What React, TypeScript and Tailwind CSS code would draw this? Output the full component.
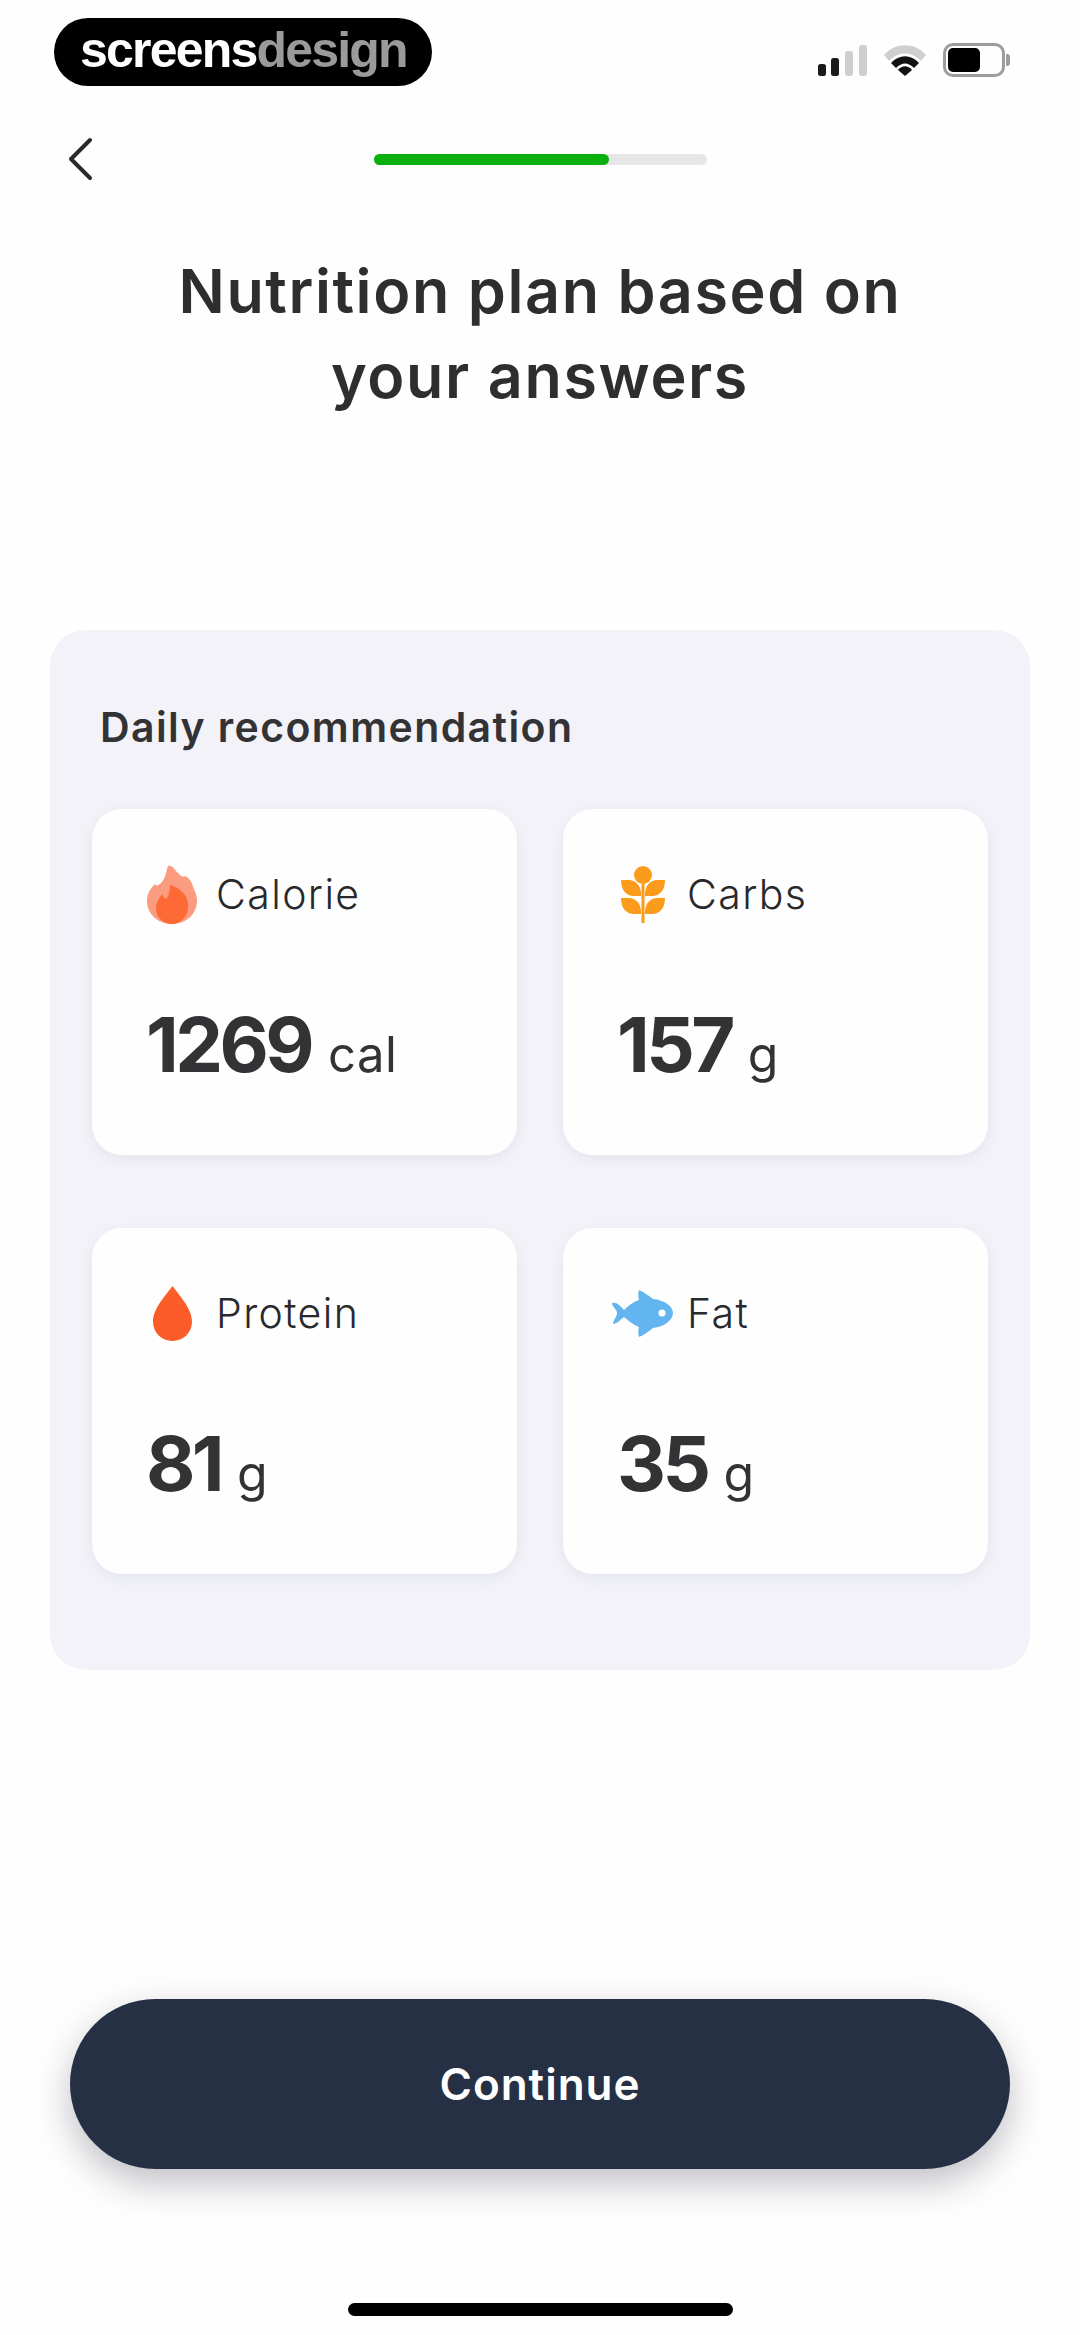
const sans = "font-['Inter','Liberation_Sans',sans-serif]";

function Flame() {
  return (
    <svg width="50" height="59" viewBox="0 0 50 59" className="shrink-0">
      <path d="M21 1C25 0 27 4 30 7C33 10 35 13 38 11C43 13 45 18 47 24C49 29 50 31 50 36C50 49 39 59 25 59C11 59 0 49 0 36C0 28 4 23 8 19C10 22 11 20 14 18C19 13 19 6 21 1Z" fill="#fb9c80" />
      <path d="M19 34C22 31 23 25 23 20C30 22 36 26 39 32C41 36 41 39 41 42C41 51 34 59 25 59C16 59 9 52 9 44C9 39 11 34 15 29C16 31 17 33 19 34Z" fill="#fe6a35" />
    </svg>
  );
}

function Wheat() {
  return (
    <svg width="44" height="57" viewBox="0 0 44 57" className="shrink-0">
      <circle cx="22" cy="9" r="9" fill="#fb9b1b" />
      <rect x="20.5" y="18" width="3" height="39" fill="#fb9b1b" />
      <path d="M0 14H8C14 14 19.5 19 20 27V30H13C5 30 0 24 0 14Z" fill="#fb9b1b" />
      <path d="M44 14H36C30 14 24.5 19 24 27V30H31C39 30 44 24 44 14Z" fill="#fb9b1b" />
      <path d="M0 32H8C14 32 19.500 37 20 45V48H13C5 48 0 42 0 32Z" fill="#fb9b1b" />
      <path d="M44 32H36C30 32 24.500 37 24 45V48H31C39 48 44 42 44 32Z" fill="#fb9b1b" />
    </svg>
  );
}

function Drop() {
  return (
    <svg width="39" height="55" viewBox="0 0 39 55" className="shrink-0">
      <path d="M19.500 0C25 8 39 22 39 35.500C39 46.500 30.500 55 19.500 55C8.500 55 0 46.500 0 35.500C0 22 14 8 19.500 0Z" fill="#fc5d28" />
    </svg>
  );
}

function Fish() {
  return (
    <svg width="61" height="47" viewBox="0 0 61 47" className="shrink-0">
      <path d="M27 0C32 2 37 6 41 9C52 10 61 16 61 23C61 30 52 37 41 38C37 41 32 45 27 47C26 43 26 40 27 37C21 35 16 30 12 27C8 30 5 34 1 34C1 30 5 27 5 23C5 19 0 17 0 13C5 12 8 16 12 20C16 16 21 12 27 10C26 7 26 3 27 0Z" fill="#63b5f0" />
      <circle cx="50" cy="23" r="3.500" fill="#ffffff" />
    </svg>
  );
}

function Card({ icon, iconPad, label, value, unit, unitClass }: { icon: React.ReactNode; iconPad: string; label: string; value: string; unit: string; unitClass: string }) {
  return (
    <div className="h-[346px] rounded-[30px] bg-[#fefefe] shadow-[0_4px_14px_rgba(120,120,160,0.10)] flex flex-col">
      <div className="h-[58px] mt-[56px] flex items-center">
        <div className={`w-[124px] flex justify-start ${iconPad}`}>{icon}</div>
        <span className={`${sans} font-light text-[41px] leading-none tracking-[1.4px] text-[#29292c]`}>{label}</span>
      </div>
      <div className="mt-[83px] pl-[54px] flex items-baseline">
        <span className={`${sans} font-bold text-[76px] leading-[76px] tracking-[-3.6px] text-[#333336]`}>{value}</span>
        <span className={`${sans} font-normal leading-none text-[#333336] ${unitClass}`}>{unit}</span>
      </div>
    </div>
  );
}

export default function App() {
  return (
    <div className={`w-[1080px] h-[2335px] bg-[#fefefe] flex flex-col overflow-hidden ${sans}`}>
      <div className="h-[87px] pt-[18px] pl-[54px] pr-[70px] flex items-start justify-between">
        <div className="w-[378px] h-[68px] rounded-[34px] bg-black flex items-center pl-[26px] pb-[4px]">
          <span className="font-['Liberation_Sans',sans-serif] font-bold text-[50px] leading-none tracking-[-1.8px] text-white">screens<span className="text-[#9a9a9a]">design</span></span>
        </div>
        <div className="flex items-center gap-[17px] mt-[25px]">
          <svg width="49" height="31" viewBox="0 0 49 31">
            <rect x="0" y="19" width="8" height="12" rx="2.500" fill="#1a1a1a" />
            <rect x="13" y="13" width="8" height="18" rx="2.500" fill="#1a1a1a" />
            <rect x="27" y="6" width="8" height="25" rx="2.500" fill="#cfcfcf" />
            <rect x="41" y="0" width="8" height="31" rx="2.500" fill="#cfcfcf" />
          </svg>
          <svg width="42" height="31" viewBox="0 0 42 31">
            <path d="M0 10C11 -3 31 -3 42 10L37 16C28 6 14 6 5 16Z" fill="#cfcfcf" />
            <path d="M7 18C15 9 27 9 35 18L30 23C24 17 18 17 12 23Z" fill="#111" />
            <path d="M14 25C18 20 24 20 28 25L21 31Z" fill="#111" />
          </svg>
          <div className="flex items-center">
            <div className="w-[62px] h-[34px] rounded-[10px] border-[3px] border-[#9c9c9c] p-[2px]">
              <div className="w-[32px] h-full rounded-[5px] bg-black" />
            </div>
            <div className="w-[4px] h-[12px] rounded-r-[3px] bg-[#9c9c9c] ml-[1px]" />
          </div>
        </div>
      </div>

      <div className="h-[44px] mt-[50px] flex items-center relative">
        <svg width="26" height="44" viewBox="0 0 26 44" className="ml-[68px]">
          <path d="M22 3L3 22L22 41" fill="none" stroke="#2a2a2c" strokeWidth="4" strokeLinecap="round" strokeLinejoin="round" />
        </svg>
        <div className="ml-[280px] w-[333px] h-[11px] rounded-full bg-[#e6e6e8]">
          <div className="w-[235px] h-full rounded-full bg-[#0bb00f]" />
        </div>
      </div>

      <h1 className="mt-[68px] text-center font-semibold text-[61px] leading-[85px] tracking-[1.6px] text-[#2e2e31]">
        Nutrition plan based on
        <br />
        your answers
      </h1>

      <div className="mt-[211px] mx-[50px] h-[1040px] rounded-[36px] bg-[#f2f2f8] px-[42px] pt-[75px]">
        <div className="pl-[8px] font-semibold text-[41px] leading-[44px] tracking-[1.4px] text-[#333336]">Daily recommendation</div>
        <div className="mt-[60px] grid grid-cols-2 gap-x-[46px] gap-y-[73px]">
          <Card icon={<Flame />} iconPad="pl-[55px]" label="Calorie" value="1269" unit="cal" unitClass="text-[49px] tracking-[0.5px] ml-[17px]" />
          <Card icon={<Wheat />} iconPad="pl-[58px]" label="Carbs" value="157" unit="g" unitClass="text-[50px] ml-[16px]" />
          <Card icon={<Drop />} iconPad="pl-[61px]" label="Protein" value="81" unit="g" unitClass="text-[50px] ml-[16px]" />
          <Card icon={<Fish />} iconPad="pl-[49px]" label="Fat" value="35" unit="g" unitClass="text-[50px] ml-[16px]" />
        </div>
      </div>

      <button className="mt-[329px] mx-[70px] h-[170px] rounded-[85px] bg-[#253044] shadow-[0_14px_36px_rgba(30,30,50,0.28)] text-white font-semibold text-[44px] leading-none tracking-[1px]">
        Continue
      </button>

      <div className="mt-[134px] mx-auto w-[385px] h-[13px] rounded-full bg-black" />
    </div>
  );
}
